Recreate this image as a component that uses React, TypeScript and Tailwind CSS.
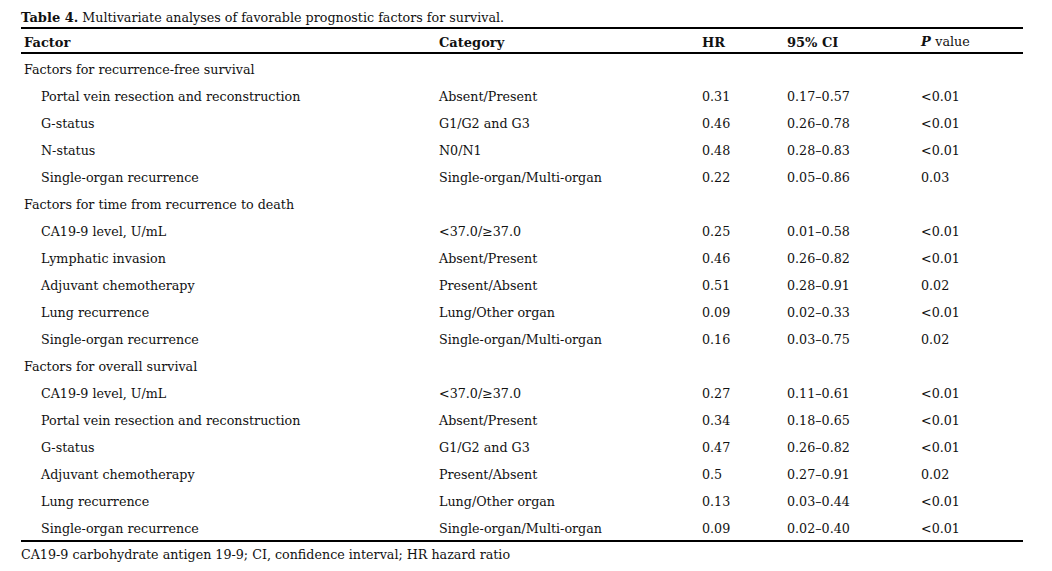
import React from "react";

type Row = { f: string; c?: string; hr?: string; ci?: string; p?: string; group?: boolean };

const rows: Row[] = [
  { f: "Factors for recurrence-free survival", group: true },
  { f: "Portal vein resection and reconstruction", c: "Absent/Present", hr: "0.31", ci: "0.17–0.57", p: "<0.01" },
  { f: "G-status", c: "G1/G2 and G3", hr: "0.46", ci: "0.26–0.78", p: "<0.01" },
  { f: "N-status", c: "N0/N1", hr: "0.48", ci: "0.28–0.83", p: "<0.01" },
  { f: "Single-organ recurrence", c: "Single-organ/Multi-organ", hr: "0.22", ci: "0.05–0.86", p: "0.03" },
  { f: "Factors for time from recurrence to death", group: true },
  { f: "CA19-9 level, U/mL", c: "<37.0/≥37.0", hr: "0.25", ci: "0.01–0.58", p: "<0.01" },
  { f: "Lymphatic invasion", c: "Absent/Present", hr: "0.46", ci: "0.26–0.82", p: "<0.01" },
  { f: "Adjuvant chemotherapy", c: "Present/Absent", hr: "0.51", ci: "0.28–0.91", p: "0.02" },
  { f: "Lung recurrence", c: "Lung/Other organ", hr: "0.09", ci: "0.02–0.33", p: "<0.01" },
  { f: "Single-organ recurrence", c: "Single-organ/Multi-organ", hr: "0.16", ci: "0.03–0.75", p: "0.02" },
  { f: "Factors for overall survival", group: true },
  { f: "CA19-9 level, U/mL", c: "<37.0/≥37.0", hr: "0.27", ci: "0.11–0.61", p: "<0.01" },
  { f: "Portal vein resection and reconstruction", c: "Absent/Present", hr: "0.34", ci: "0.18–0.65", p: "<0.01" },
  { f: "G-status", c: "G1/G2 and G3", hr: "0.47", ci: "0.26–0.82", p: "<0.01" },
  { f: "Adjuvant chemotherapy", c: "Present/Absent", hr: "0.5", ci: "0.27–0.91", p: "0.02" },
  { f: "Lung recurrence", c: "Lung/Other organ", hr: "0.13", ci: "0.03–0.44", p: "<0.01" },
  { f: "Single-organ recurrence", c: "Single-organ/Multi-organ", hr: "0.09", ci: "0.02–0.40", p: "<0.01" },
];

const grid = "grid grid-cols-[415px_263px_85px_134px_1fr] items-center";

export default function App() {
  return (
    <div
      className="w-[1052px] h-[571px] bg-white text-[#111] text-[12.7px] leading-none"
      style={{ fontFamily: '"DejaVu Serif", serif' }}
    >
      <div className="ml-[21px] w-[1002px]">
        <div className="h-[29px] flex items-center pt-[8px] border-b-2 border-black">
          <span>
            <b className="text-[13px]">Table 4.</b> Multivariate analyses of favorable prognostic factors for survival.
          </span>
        </div>
        <div className={`${grid} h-[25px] text-[13px] font-bold border-b-2 border-black pl-[3px] pt-[3px]`}>
          <div>Factor</div>
          <div>Category</div>
          <div>HR</div>
          <div>95% CI</div>
          <div>
            <i>P</i> <span className="font-normal text-[12.7px]">value</span>
          </div>
        </div>
        <div className="border-b-2 border-black">
          {rows.map((r, i) => (
            <div key={i} className={`${grid} h-[27px] pl-[3px] pt-[6px]`}>
              <div className={r.group ? "" : "pl-[17px]"}>{r.f}</div>
              <div>{r.c}</div>
              <div>{r.hr}</div>
              <div>{r.ci}</div>
              <div>{r.p}</div>
            </div>
          ))}
        </div>
        <div className="h-[24px] flex items-center pt-[3px]">
          CA19-9 carbohydrate antigen 19-9; CI, confidence interval; HR hazard ratio
        </div>
      </div>
    </div>
  );
}
